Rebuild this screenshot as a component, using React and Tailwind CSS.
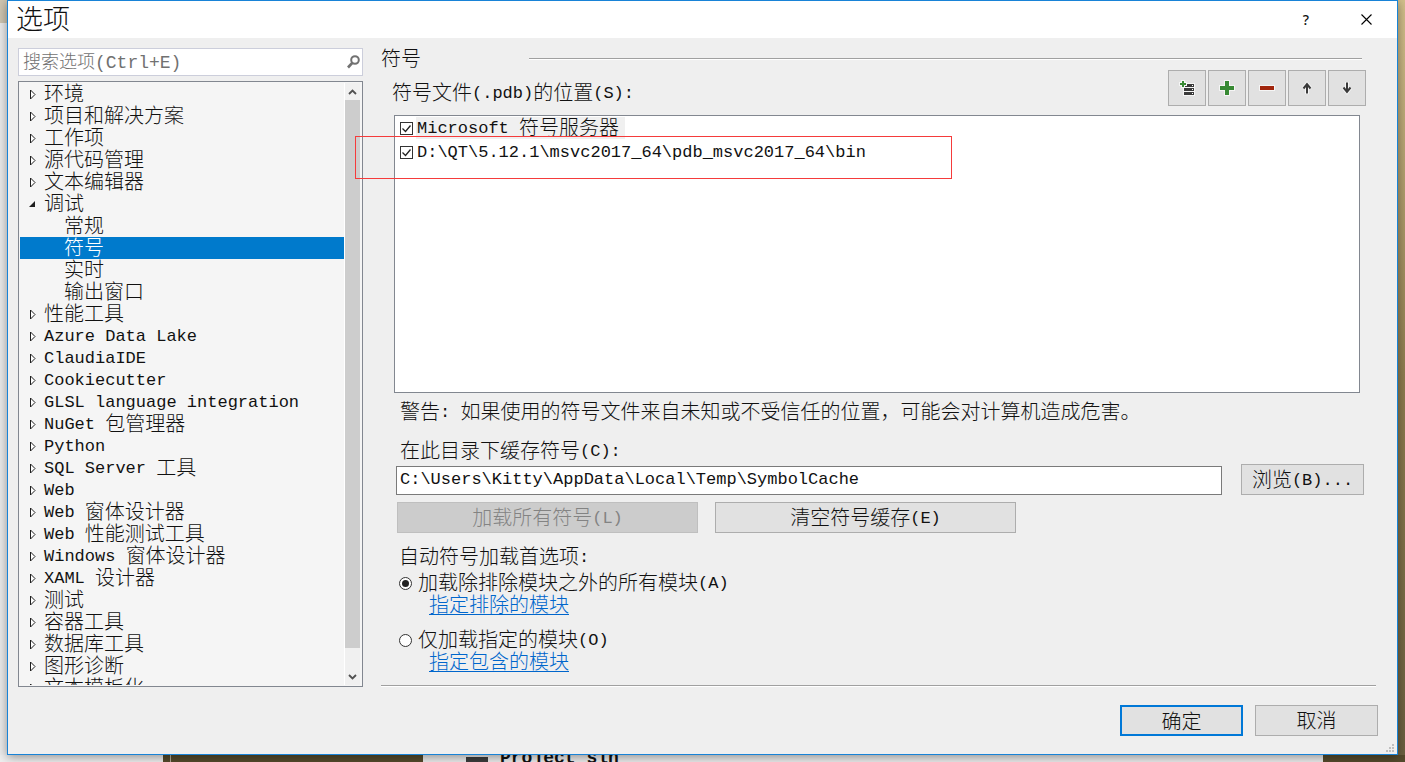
import React, { useState } from 'react'

const TREE = [
  { label: '环境' },
  { label: '项目和解决方案' },
  { label: '工作项' },
  { label: '源代码管理' },
  { label: '文本编辑器' },
  { label: '调试', children: ['常规', '符号', '实时', '输出窗口'] },
  { label: '性能工具' },
  { label: 'Azure Data Lake' },
  { label: 'ClaudiaIDE' },
  { label: 'Cookiecutter' },
  { label: 'GLSL language integration' },
  { label: 'NuGet 包管理器' },
  { label: 'Python' },
  { label: 'SQL Server 工具' },
  { label: 'Web' },
  { label: 'Web 窗体设计器' },
  { label: 'Web 性能测试工具' },
  { label: 'Windows 窗体设计器' },
  { label: 'XAML 设计器' },
  { label: '测试' },
  { label: '容器工具' },
  { label: '数据库工具' },
  { label: '图形诊断' },
  { label: '文本模板化' },
]

// Latin runs are set smaller so that one CJK cell equals two Latin cells,
// and CJK runs hang a little below the Latin baseline
function Txt({ children }) {
  return children.split(/([\x20-\x7e]+)/).filter(Boolean).map((part, i) =>
    /^[\x20-\x7e]/.test(part) ? (
      <span key={i} className="text-[17px] whitespace-pre">{part}</span>
    ) : (
      <span key={i} className="align-[-2px] leading-[16px]">{part}</span>
    )
  )
}

function TreeRow({ label, depth, open, selected, onClick }) {
  return (
    <button
      type="button"
      onClick={onClick}
      className={`flex h-[22px] w-full shrink-0 items-center text-left leading-[22px] whitespace-nowrap ${selected ? 'bg-[#007acc] text-white' : ''}`}
    >
      {depth === 0 ? (
        <svg className="ml-[8px] mr-[6px] shrink-0" width="10" height="12" viewBox="0 0 10 12">
          {open ? (
            <path d="M7 3v6H1z" fill="#1e1e1e" />
          ) : (
            <path d="M2.5 2v9L7 6.5z" fill="#fff" stroke="#1e1e1e" />
          )}
        </svg>
      ) : (
        <span className="w-[44px] shrink-0"></span>
      )}
      <span><Txt>{label}</Txt></span>
    </button>
  )
}

function ToolButton({ label, children }) {
  return (
    <button
      type="button"
      aria-label={label}
      className="flex h-[36px] w-[38px] items-center justify-center border border-[#adadad] bg-[#e1e1e1]"
    >
      <svg width="16" height="16" viewBox="0 0 16 16">{children}</svg>
    </button>
  )
}

function CheckItem({ label, highlighted }) {
  return (
    <label className="flex h-[24px] items-center pl-[5px] leading-[22px] whitespace-nowrap">
      <span className="grid h-[13px] w-[13px] shrink-0">
        <input type="checkbox" defaultChecked className="peer col-start-1 row-start-1 h-[13px] w-[13px] appearance-none border border-[#333] bg-white" />
        <svg className="pointer-events-none invisible col-start-1 row-start-1 peer-checked:visible" width="13" height="13" viewBox="0 0 13 13">
          <path d="M2.5 6.5l3 3 5-6" fill="none" stroke="#212121" strokeWidth="1.3" />
        </svg>
      </span>
      <span className={`ml-[3px] h-[22px] pr-[6px] pl-px ${highlighted ? 'bg-[#f0f0f0]' : ''}`}>
        <Txt>{label}</Txt>
      </span>
    </label>
  )
}

function RadioItem({ label, link, value, mode, setMode }) {
  return (
    <div>
      <label className="flex h-[24px] items-center leading-[24px]">
        <span className="grid h-[13px] w-[13px] shrink-0">
          <input
            type="radio"
            name="mode"
            checked={mode === value}
            onChange={() => setMode(value)}
            className="peer col-start-1 row-start-1 h-[13px] w-[13px] appearance-none rounded-full border border-[#333] bg-white"
          />
          <span className="pointer-events-none invisible col-start-1 row-start-1 h-[7px] w-[7px] place-self-center rounded-full bg-[#222] peer-checked:visible"></span>
        </span>
        <span className="ml-[6px]"><Txt>{label}</Txt></span>
      </label>
      <div className="h-[20px] pl-[30px] leading-[20px]">
        <a href="#" className="text-[#0066cc] underline decoration-1 underline-offset-4"><Txt>{link}</Txt></a>
      </div>
    </div>
  )
}

export default function App() {
  const [selected, setSelected] = useState('符号')
  const [mode, setMode] = useState('exclude')
  const [cache, setCache] = useState('C:\\Users\\Kitty\\AppData\\Local\\Temp\\SymbolCache')

  const pushButton = 'h-[31px] border border-[#adadad] bg-[#e1e1e1]'

  return (
    <div className="flex h-screen flex-col overflow-hidden bg-[#e9e9e9] font-['Liberation_Mono','Noto_Sans_CJK_SC',monospace] text-[20px] font-light text-[#111]">
      <div className="flex min-h-0 flex-1">
        {/* Desktop showing at the left edge */}
        <div className="flex w-[7px] shrink-0 flex-col">
          <div className="h-[23px] bg-[#cfc6b2]"></div>
          <div className="flex-1 bg-[#ececec]"></div>
        </div>

        <div className="relative z-10 flex min-w-0 flex-1 flex-col border border-[#1883d7] bg-[#efefef] shadow-[0_2px_10px_rgba(0,0,0,0.4)]">
          <header className="flex h-[37px] shrink-0 items-center bg-white pl-[8px]">
            <h1 className="flex-1 text-[27px] leading-[36px]"><Txt>选项</Txt></h1>
            <button type="button" aria-label="帮助" className="flex h-full w-[60px] items-center justify-center font-['Noto_Sans'] text-[14px] font-medium">?</button>
            <button type="button" aria-label="关闭" className="flex h-full w-[61px] items-center justify-center">
              <svg width="11" height="11" viewBox="0 0 11 11">
                <path d="M.5.5l10 10M10.5.5l-10 10" stroke="#000" strokeWidth="1.1" />
              </svg>
            </button>
          </header>

          <div className="flex min-h-0 flex-1 gap-[18px] pt-[10px] pl-[10px]">
            {/* Category tree */}
            <nav className="flex w-[345px] shrink-0 flex-col gap-[5px]">
              <div className="flex h-[28px] shrink-0 items-center border border-[#cccedb] bg-white pr-[2px] pl-[4px]">
                <input
                  type="search"
                  aria-label="搜索选项"
                  placeholder="搜索选项(Ctrl+E)"
                  className="min-w-0 flex-1 pt-[2px] text-[18px] leading-[24px] outline-none placeholder:text-[#717171]"
                />
                <svg width="13" height="14" viewBox="0 0 13 14">
                  <circle cx="8" cy="5" r="3.8" fill="none" stroke="#717171" strokeWidth="2" />
                  <path d="M5.2 8L1 12.5" stroke="#717171" strokeWidth="2.6" />
                </svg>
              </div>

              <div className="flex min-h-0 flex-1 border border-[#828790] bg-[#f5f5f5] p-px">
                <div className="flex min-w-0 flex-1 flex-col overflow-hidden">
                  {TREE.map((node) => (
                    <React.Fragment key={node.label}>
                      <TreeRow
                        label={node.label}
                        depth={0}
                        open={!!node.children}
                        selected={selected === node.label}
                        onClick={() => setSelected(node.label)}
                      />
                      {node.children?.map((child) => (
                        <TreeRow
                          key={child}
                          label={child}
                          depth={1}
                          selected={selected === child}
                          onClick={() => setSelected(child)}
                        />
                      ))}
                    </React.Fragment>
                  ))}
                </div>
                <div className="flex w-[17px] shrink-0 flex-col border-x border-l-white border-r-[#f5f5f5] bg-[#f0f0f0]">
                  <div className="flex h-[17px] items-center justify-center">
                    <svg width="9" height="6" viewBox="0 0 9 6"><path d="M1 5l3.500-3.500L8 5" fill="none" stroke="#505050" strokeWidth="1.8" /></svg>
                  </div>
                  <div className="flex-1 bg-[#cdcdcd]"></div>
                  <div className="flex h-[37px] items-end justify-center pb-[5px]">
                    <svg width="9" height="6" viewBox="0 0 9 6"><path d="M1 1l3.500 3.500L8 1" fill="none" stroke="#505050" strokeWidth="1.8" /></svg>
                  </div>
                </div>
              </div>
            </nav>

            {/* Symbols page */}
            <main className="mr-[21px] mb-px flex min-w-0 flex-1 flex-col border-b border-[#a0a0a0] shadow-[0_1px_0_#fff]">
              <div className="flex h-[22px] items-center pr-[14px]">
                <h2 className="w-[148px] leading-[20px]"><Txt>符号</Txt></h2>
                <div className="h-[2px] flex-1 border-t border-b border-t-[#a0a0a0] border-b-white"></div>
              </div>

              <div className="flex h-[36px] items-center justify-between pr-[10px] pl-[11px]">
                <span id="locations" className="pt-[10px] leading-[24px]"><Txt>符号文件(.pdb)的位置(S):</Txt></span>
                <div className="flex gap-[2px]">
                  <ToolButton label="添加符号服务器">
                    <path d="M5 3h11v13H4V7h1z" fill="#f5f5f5" />
                    <path d="M6 4h9v3H6zM5 8h10v3H5zM5 12h10v3H5z" fill="#3a3a3a" />
                    <path d="M13 5h1v1h-1zM13 9h1v1h-1zM13 13h1v1h-1z" fill="#fff" />
                    <path d="M2 0h4v2h2v4H6v2H2V6H0V2h2z" fill="#f5f5f5" />
                    <path d="M3 1h2v2h2v2H5v2H3V5H1V3h2z" fill="#388a34" />
                  </ToolButton>
                  <ToolButton label="添加">
                    <path d="M5 0h6v5h5v6h-5v5H5v-5H0V5h5z" fill="#f5f5f5" />
                    <path d="M6 1h4v5h5v4h-5v5H6v-5H1V6h5z" fill="#388a34" />
                  </ToolButton>
                  <ToolButton label="删除">
                    <path d="M0 5h16v6H0z" fill="#f5f5f5" />
                    <path d="M1 6h14v4H1z" fill="#a1260d" />
                  </ToolButton>
                  <ToolButton label="上移">
                    <path d="M8 14V4M4.500 8.500L8 4.200l3.500 4.300" fill="none" stroke="#f5f5f5" strokeWidth="4" />
                    <path d="M8 13.500V4M4.500 8.500L8 4.200l3.500 4.300" fill="none" stroke="#3a3a3a" strokeWidth="2" />
                  </ToolButton>
                  <ToolButton label="下移">
                    <path d="M8 2V12M4.500 7.500L8 11.800l3.500-4.300" fill="none" stroke="#f5f5f5" strokeWidth="4" />
                    <path d="M8 2.500V12M4.500 7.500L8 11.800l3.500-4.300" fill="none" stroke="#3a3a3a" strokeWidth="2" />
                  </ToolButton>
                </div>
              </div>

              <div role="group" aria-labelledby="locations" className="relative mt-[9px] mr-[16px] ml-[13px] min-h-0 flex-1 border border-[#828790] bg-white">
                <CheckItem label="Microsoft 符号服务器" highlighted />
                <CheckItem label="D:\QT\5.12.1\msvc2017_64\pdb_msvc2017_64\bin" />
                {/* Highlight around the added path */}
                <div className="pointer-events-none absolute top-[20px] left-[-40px] h-[43px] w-[597px] border border-[#f53b3b]"></div>
              </div>

              <p className="mt-[7px] h-[24px] pl-[19px] leading-[24px]">
                <Txt>警告: 如果使用的符号文件来自未知或不受信任的位置，可能会对计算机造成危害。</Txt>
              </p>

              <label htmlFor="cache" className="mt-[15px] h-[25px] pl-[19px] leading-[24px]"><Txt>在此目录下缓存符号(C):</Txt></label>
              <div className="flex items-end gap-[19px] pr-[12px] pl-[15px]">
                <input
                  id="cache"
                  value={cache}
                  onChange={(e) => setCache(e.target.value)}
                  className="h-[29px] min-w-0 flex-1 border border-[#7a7a7a] bg-white px-[3px] pb-[2px] text-[17px] outline-none"
                />
                <button type="button" className={`${pushButton} w-[123px] whitespace-nowrap`}><Txt>浏览(B)...</Txt></button>
              </div>

              <div className="mt-[7px] flex gap-[17px] pl-[16px]">
                <button type="button" disabled className="h-[31px] w-[301px] border border-[#bfbfbf] bg-[#cccccc] text-[#838383]"><Txt>加载所有符号(L)</Txt></button>
                <button type="button" className={`${pushButton} w-[301px]`}><Txt>清空符号缓存(E)</Txt></button>
              </div>

              <fieldset className="mt-[12px] mb-[12px] pl-[18px]">
                <legend className="h-[24px] leading-[24px]"><Txt>自动符号加载首选项:</Txt></legend>
                <div className="flex flex-col gap-[13px] pt-[2px] pb-px">
                  <RadioItem label="加载除排除模块之外的所有模块(A)" link="指定排除的模块" value="exclude" mode={mode} setMode={setMode} />
                  <RadioItem label="仅加载指定的模块(O)" link="指定包含的模块" value="include" mode={mode} setMode={setMode} />
                </div>
              </fieldset>
            </main>
          </div>

          <footer className="flex shrink-0 justify-end gap-[12px] pt-[18px] pr-[19px] pb-[18px]">
            <button type="submit" className="h-[31px] w-[123px] border-2 border-[#0078d7] bg-[#e1e1e1]"><Txt>确定</Txt></button>
            <button type="button" className={`${pushButton} w-[123px]`}><Txt>取消</Txt></button>
          </footer>

          <svg className="absolute right-[3px] bottom-[2px]" width="8" height="8" viewBox="0 0 8 8" fill="#bfbfbf">
            <path d="M6 0h2v2H6zM3 3h2v2H3zM6 3h2v2H6zM0 6h2v2H0zM3 6h2v2H3zM6 6h2v2H6z" />
          </svg>
        </div>

        <div className="w-[7px] shrink-0 bg-linear-to-b from-[#d3c08c] via-[#8f7d50] to-[#6b6040]"></div>
      </div>

      {/* Windows behind the dialog */}
      <div className="flex h-[7px] shrink-0 overflow-hidden">
        <div className="w-[163px] bg-[#efefef]"></div>
        <div className="w-[8px] border-r border-[#b5ac98] bg-[#554a2c]"></div>
        <div className="w-[252px] bg-[#554a2c]"></div>
        <div className="flex flex-1 items-start gap-[12px] bg-[#ececec] pl-[43px]">
          <div className="mt-[2px] h-[5px] w-[22px] bg-[#3c3c3c]"></div>
          <div className="-mt-[7px] text-[18px] leading-[20px] font-bold whitespace-pre">Project sln</div>
        </div>
        <div className="w-[82px] bg-[#554a2c]"></div>
      </div>
    </div>
  )
}
